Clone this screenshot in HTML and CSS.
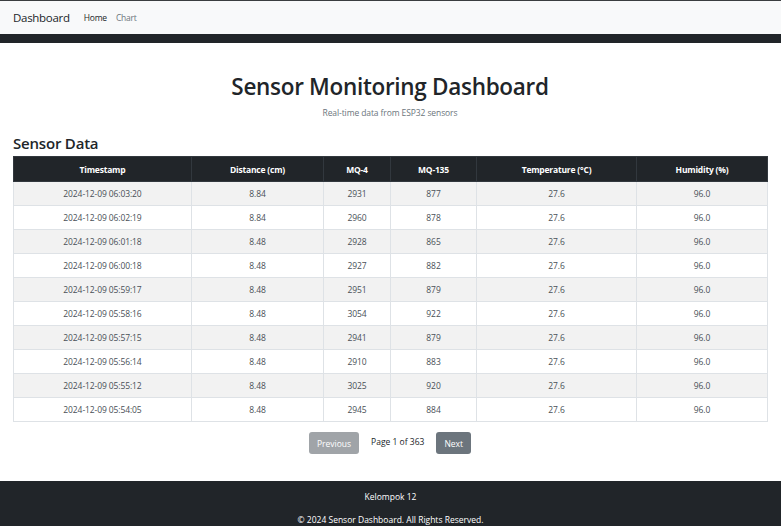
FILE: index.html
```html
<!DOCTYPE html>
<html>
<head>
<meta charset="utf-8">
<link rel="stylesheet" href="styles.css">
</head>
<body>
<nav class="navbar">
  <span class="brand">Dashboard</span>
  <a class="nav-link active">Home</a>
  <a class="nav-link">Chart</a>
</nav>
<div class="dark-bar"></div>
<main class="main">
  <header class="hero">
    <h1 class="title">Sensor Monitoring Dashboard</h1>
    <p class="subtitle">Real-time data from ESP32 sensors</p>
  </header>
  <h2 class="section-title">Sensor Data</h2>
  <table class="data-table">
    <colgroup>
      <col class="c1"><col class="c2"><col class="c3"><col class="c4"><col class="c5"><col class="c6">
    </colgroup>
    <thead>
      <tr><th>Timestamp</th><th>Distance (cm)</th><th>MQ-4</th><th>MQ-135</th><th>Temperature (°C)</th><th>Humidity (%)</th></tr>
    </thead>
    <tbody>
      <tr><td>2024-12-09 06:03:20</td><td>8.84</td><td>2931</td><td>877</td><td>27.6</td><td>96.0</td></tr>
      <tr><td>2024-12-09 06:02:19</td><td>8.84</td><td>2960</td><td>878</td><td>27.6</td><td>96.0</td></tr>
      <tr><td>2024-12-09 06:01:18</td><td>8.48</td><td>2928</td><td>865</td><td>27.6</td><td>96.0</td></tr>
      <tr><td>2024-12-09 06:00:18</td><td>8.48</td><td>2927</td><td>882</td><td>27.6</td><td>96.0</td></tr>
      <tr><td>2024-12-09 05:59:17</td><td>8.48</td><td>2951</td><td>879</td><td>27.6</td><td>96.0</td></tr>
      <tr><td>2024-12-09 05:58:16</td><td>8.48</td><td>3054</td><td>922</td><td>27.6</td><td>96.0</td></tr>
      <tr><td>2024-12-09 05:57:15</td><td>8.48</td><td>2941</td><td>879</td><td>27.6</td><td>96.0</td></tr>
      <tr><td>2024-12-09 05:56:14</td><td>8.48</td><td>2910</td><td>883</td><td>27.6</td><td>96.0</td></tr>
      <tr><td>2024-12-09 05:55:12</td><td>8.48</td><td>3025</td><td>920</td><td>27.6</td><td>96.0</td></tr>
      <tr><td>2024-12-09 05:54:05</td><td>8.48</td><td>2945</td><td>884</td><td>27.6</td><td>96.0</td></tr>
    </tbody>
  </table>
  <div class="pagination">
    <button class="btn btn-prev">Previous</button>
    <span class="page-info">Page 1 of 363</span>
    <button class="btn btn-next">Next</button>
  </div>
</main>
<footer class="footer">
  <p class="footer-line">Kelompok 12</p>
  <p class="footer-line">© 2024 Sensor Dashboard. All Rights Reserved.</p>
</footer>
</body>
</html>
```
FILE: styles.css
```css
* { box-sizing: border-box; }
html, body { margin: 0; padding: 0; }
body {
  font-family: "Open Sans", "Noto Sans", sans-serif;
  color: #212529;
  background: #fff;
  width: 781px;
  height: 526px;
  overflow: hidden;
}
.navbar {
  display: flex;
  align-items: center;
  height: 34px;
  background: #f8f9fa;
  border-top: 1px solid #3a3d40;
  padding-left: 13px;
}
.brand {
  font-size: 11.5px;
  color: #212529;
  margin-right: 14px;
  letter-spacing: -0.3px;
}
.nav-link {
  font-size: 8.5px;
  color: #6c757d;
  margin-right: 9px;
  letter-spacing: -0.2px;
}
.nav-link.active { color: #212529; }
.dark-bar {
  height: 9px;
  background: #212529;
}
.main {
  padding: 0 14px 0 13px;
}
.hero {
  text-align: center;
  padding-top: 28px;
}
.title {
  margin: 0;
  font-size: 22.5px;
  font-weight: 600;
  line-height: 32px;
  letter-spacing: -0.3px;
}
.subtitle {
  margin: 4px 0 0;
  font-size: 8.5px;
  color: #6c757d;
  line-height: 12px;
  letter-spacing: -0.1px;
}
.section-title {
  margin: 14px 0 3px;
  font-size: 15px;
  font-weight: 600;
  line-height: 20px;
  letter-spacing: -0.2px;
}
.data-table {
  width: 754px;
  border-collapse: collapse;
  table-layout: fixed;
  font-size: 8.5px;
}
.c1 { width: 178px; }
.c2 { width: 132px; }
.c3 { width: 67px; }
.c4 { width: 86px; }
.c5 { width: 160px; }
.c6 { width: 131px; }
.data-table th {
  background: #212529;
  color: #fff;
  font-weight: 700;
  height: 25px;
  border: 1px solid #32383e;
  letter-spacing: -0.2px;
}
.data-table td {
  text-align: center;
  height: 24px;
  border: 1px solid #dee2e6;
  color: #495057;
  letter-spacing: -0.1px;
}
.data-table tbody tr:nth-child(odd) td { background: #f2f2f2; }
.pagination {
  display: flex;
  justify-content: center;
  align-items: center;
  gap: 12px;
  margin-top: 10px;
}
.btn {
  font-family: inherit;
  font-size: 8.5px;
  color: #fff;
  border: none;
  border-radius: 3px;
  height: 22px;
  padding: 0 8px;
}
.btn-prev { background: #a0a4a8; }
.btn-next { background: #6c757d; }
.page-info {
  font-size: 8.5px;
  color: #212529;
  margin-top: -4px;
}
.footer {
  margin-top: 27px;
  background: #212529;
  color: #fff;
  text-align: center;
  height: 60px;
  padding-top: 10px;
}
.footer-line {
  margin: 0 0 11px;
  font-size: 8.5px;
  line-height: 12px;
}
```
